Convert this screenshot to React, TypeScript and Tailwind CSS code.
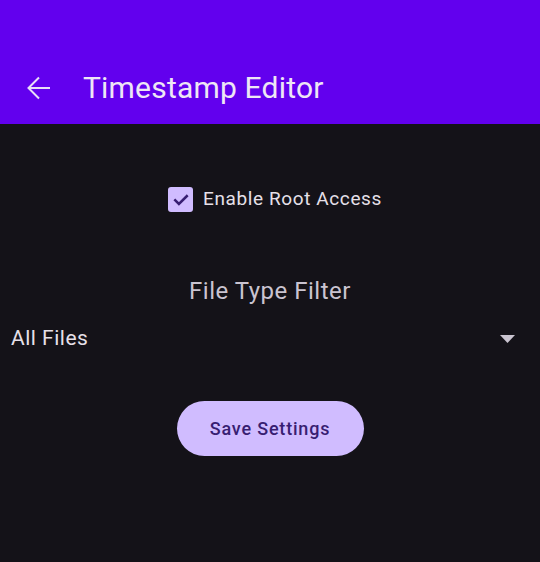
export default function App() {
  return (
    <div
      className="w-[540px] h-[562px] bg-[#141218] flex flex-col"
      style={{ fontFamily: "Roboto, 'Noto Sans', sans-serif" }}
    >
      {/* Top app bar */}
      <div className="h-[124px] bg-[#6200EE] flex items-end pb-[14px]">
        <div className="flex items-center h-[44px]">
          <svg
            className="ml-[27px] w-[24px] h-[24px]"
            viewBox="0 0 24 24"
            fill="none"
            stroke="#E8DDF7"
            strokeWidth="2"
          >
            <path d="M23 12H2" />
            <path d="M12 1.5L1.5 12L12 22.5" />
          </svg>
          <h1 className="ml-[32px] text-[30px] text-[#EEE6F5] leading-none tracking-[0.2px]">Timestamp Editor</h1>
        </div>
      </div>

      {/* Root access */}
      <div className="flex justify-center items-center mt-[62px] h-[26px] pl-[10px]">
        <div className="w-[25px] h-[25px] rounded-[3px] bg-[#D0BCFF] flex items-center justify-center">
          <svg className="w-[20px] h-[20px]" viewBox="0 0 24 24" fill="none" stroke="#381E72" strokeWidth="3">
            <path d="M4 12.5L9.5 18L20 7.5" />
          </svg>
        </div>
        <span className="ml-[10px] text-[19px] text-[#E6E0E9] tracking-[0.6px]">Enable Root Access</span>
      </div>

      {/* File type filter */}
      <div className="mt-[67px] text-center text-[24px] text-[#CAC4D0] leading-none tracking-[0.5px]">
        File Type Filter
      </div>
      <div className="mt-[20px] flex items-center justify-between pl-[11px] pr-[25px]">
        <span className="text-[21px] text-[#E6E0E9] tracking-[0.5px]">All Files</span>
        <svg className="w-[15px] h-[8px]" viewBox="0 0 15 8">
          <path d="M0 0H15L7.5 8Z" fill="#CAC4D0" />
        </svg>
      </div>

      {/* Save */}
      <div className="mt-[46px] flex justify-center">
        <button className="w-[187px] h-[55px] rounded-full bg-[#D0BCFF] text-[#381E72] text-[18px] font-medium tracking-[0.8px]">
          Save Settings
        </button>
      </div>
    </div>
  )
}
